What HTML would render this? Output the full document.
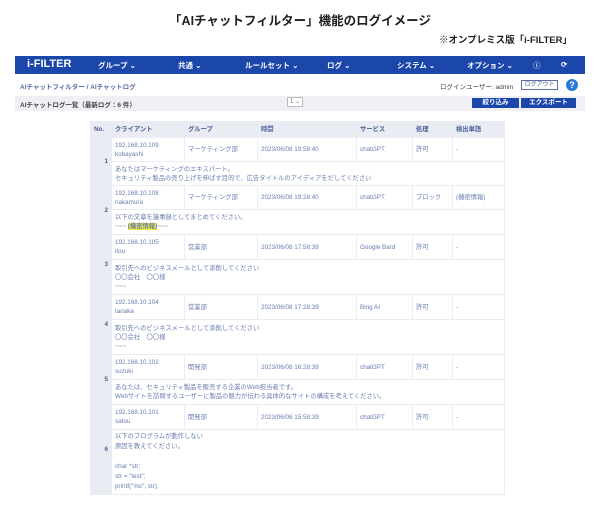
<!DOCTYPE html>
<html><head><meta charset="utf-8"><style>
*{margin:0;padding:0;box-sizing:border-box}
body{width:600px;height:506px;background:#fff;font-family:"Liberation Sans","Noto Sans CJK JP",sans-serif;position:relative;overflow:hidden;color:#333}
.a{position:absolute;white-space:nowrap}
.nav{left:15px;top:56px;width:570px;height:18px;background:#1b46aa}
.nav span{position:absolute;top:4px;color:#fff;font-size:7.5px;font-weight:bold}
.t{color:#5b6fa5;font-size:6.5px}
table{position:absolute;left:90px;top:121px;width:415px;border-collapse:separate;border-spacing:1px;background:#e9ecf2;font-size:6.3px;color:#6a7db0}
td,th{background:#fff;padding:0 3px;text-align:left;vertical-align:middle;line-height:9px}
th{background:#e9ecf2;color:#4a5f98;height:15px;font-weight:bold}
td.n{background:#e9ecf2;text-align:right;font-weight:bold;color:#4a5f98}
.btn{background:#1b46aa;color:#fff;font-size:6.5px;font-weight:bold;text-align:center;line-height:10px;height:10px;top:98px}
</style></head><body>
<div class="a" style="left:0;width:600px;text-align:center;top:10px;font-size:12.5px;font-weight:bold;color:#222">「AIチャットフィルター」機能のログイメージ</div>
<div class="a" style="right:28px;top:32px;font-size:9.5px;font-weight:bold;color:#222">※オンプレミス版「i-FILTER」</div>
<div class="a nav">
<span style="left:12px;top:2px;font-size:11px">i-FILTER</span>
<span style="left:83px">グループ ⌄</span>
<span style="left:163px">共通 ⌄</span>
<span style="left:230px">ルールセット ⌄</span>
<span style="left:312px">ログ ⌄</span>
<span style="left:382px">システム ⌄</span>
<span style="left:452px">オプション ⌄</span>
<span style="left:518px">ⓘ</span>
<span style="left:546px">⟳</span>
</div>
<div class="a t" style="left:20px;top:81px;font-weight:bold">AIチャットフィルター / AIチャットログ</div>
<div class="a t" style="left:440px;top:81px;color:#444">ログインユーザー: admin</div>
<div class="a" style="left:521px;top:80px;width:37px;height:10px;border:1px solid #5b6fa5;font-size:6px;color:#4a5f98;text-align:center;line-height:8px">ログアウト</div>
<div class="a" style="left:566px;top:79px;width:12px;height:12px;border-radius:50%;background:#2a7ad8;color:#fff;font-size:9px;font-weight:bold;text-align:center;line-height:12px">?</div>
<div class="a" style="left:15px;top:96px;width:570px;height:15px;background:#eef0f5"></div>
<div class="a t" style="left:20px;top:99px;font-weight:bold;color:#444">AIチャットログ一覧（最新ログ：6 件）</div>
<div class="a" style="left:287px;top:97px;width:16px;height:10px;border:1px solid #bbb;background:#fff;font-size:6px;color:#777;line-height:8px;text-align:center">1 ⌄</div>
<div class="a btn" style="left:472px;width:47px">絞り込み</div>
<div class="a btn" style="left:521px;width:55px">エクスポート</div>
<table>
<tr><th style="width:20px">No.</th><th style="width:72px">クライアント</th><th style="width:72px">グループ</th><th style="width:98px">時間</th><th style="width:55px">サービス</th><th style="width:39px">処理</th><th>検出単語</th></tr>
<tr style="height:23px"><td class="n" rowspan="2">1</td><td>192.168.10.109<br>kobayashi</td><td>マーケティング部</td><td>2023/06/08 19:58:40</td><td>chatGPT</td><td>許可</td><td>-</td></tr>
<tr style="height:23px"><td colspan="6">あなたはマーケティングのエキスパート。<br>セキュリティ製品の売り上げを伸ばす目的で、広告タイトルのアイディアをだしてください</td></tr>
<tr style="height:23px"><td class="n" rowspan="2">2</td><td>192.168.10.108<br>nakamura</td><td>マーケティング部</td><td>2023/06/08 19:28:40</td><td>chatGPT</td><td>ブロック</td><td>(機密情報)</td></tr>
<tr style="height:24px"><td colspan="6">以下の文章を議事録としてまとめてください。<br>~~~ <b style="background:#f4f03a">(機密情報)</b>~~~</td></tr>
<tr style="height:24px"><td class="n" rowspan="2">3</td><td>192.168.10.105<br>itou</td><td>営業部</td><td>2023/06/08 17:58:39</td><td>Google Bard</td><td>許可</td><td>-</td></tr>
<tr style="height:34px"><td colspan="6">取引先へのビジネスメールとして添削してください<br>〇〇会社　〇〇様<br>~~~</td></tr>
<tr style="height:24px"><td class="n" rowspan="2">4</td><td>192.168.10.104<br>tanaka</td><td>営業部</td><td>2023/06/08 17:28:39</td><td>Bing AI</td><td>許可</td><td>-</td></tr>
<tr style="height:34px"><td colspan="6">取引先へのビジネスメールとして添削してください<br>〇〇会社　〇〇様<br>~~~</td></tr>
<tr style="height:24px"><td class="n" rowspan="2">5</td><td>192.168.10.102<br>suzuki</td><td>開発部</td><td>2023/06/08 16:28:39</td><td>chatGPT</td><td>許可</td><td>-</td></tr>
<tr style="height:24px"><td colspan="6">あなたは、セキュリティ製品を販売する企業のWeb担当者です。<br>Webサイトを訪問するユーザーに製品の魅力が伝わる具体的なサイトの構成を考えてください。</td></tr>
<tr style="height:24px"><td class="n" rowspan="2">6</td><td>192.168.10.101<br>satou</td><td>開発部</td><td>2023/06/08 15:58:39</td><td>chatGPT</td><td>許可</td><td>-</td></tr>
<tr style="height:64px"><td colspan="6" style="line-height:10px">以下のプログラムが動作しない<br>原因を教えてください。<br><br>char *str;<br>str = "test";<br>printf("%s", str);</td></tr>
</table>
</body></html>
